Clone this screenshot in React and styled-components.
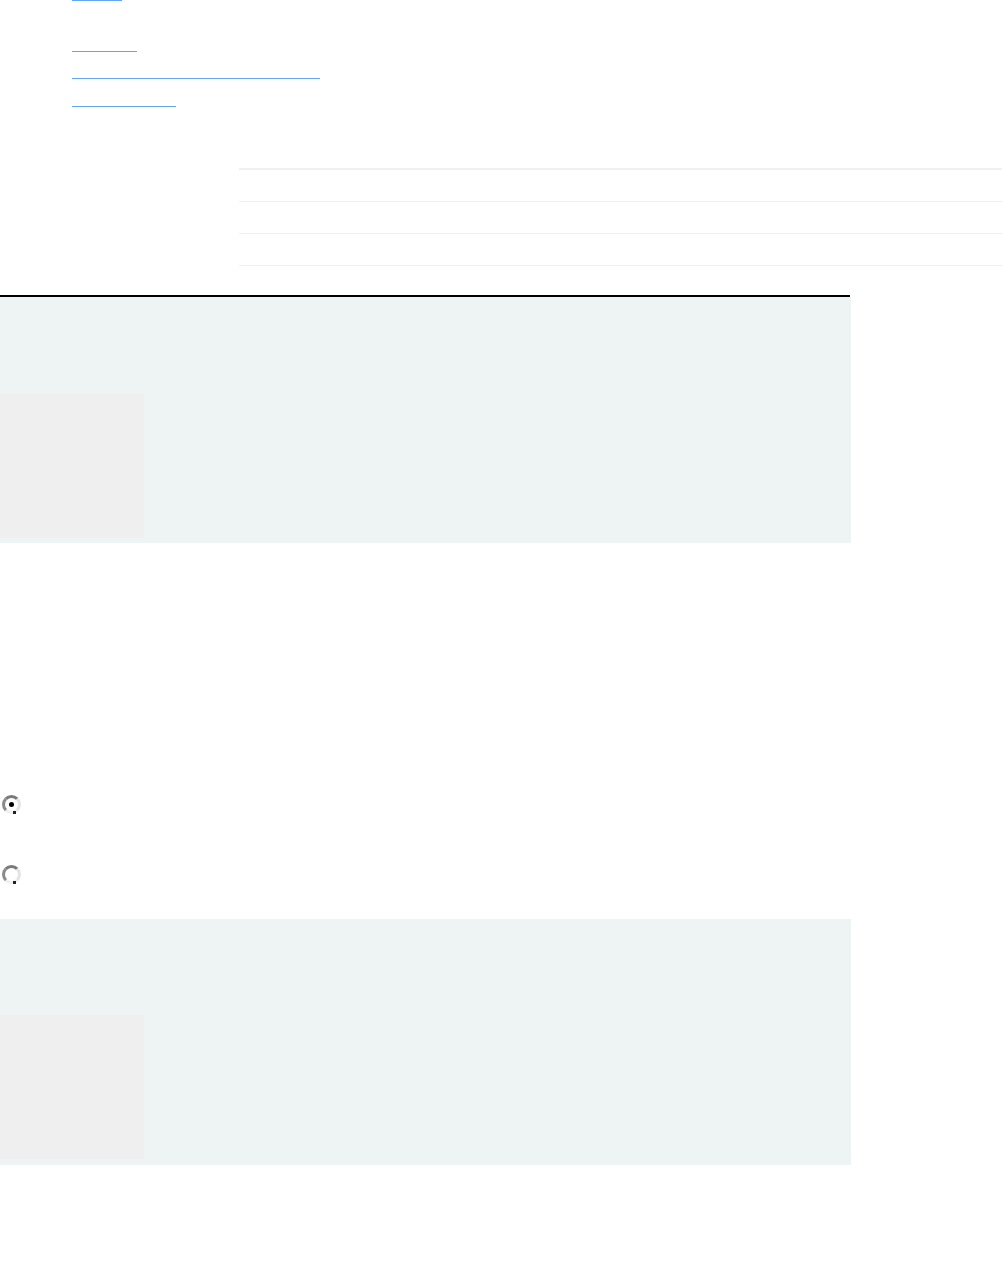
import React from "react";
import styled, { createGlobalStyle } from "styled-components";

const Global = createGlobalStyle`
  html, body { margin: 0; padding: 0; background: #fff; }
  body { font-family: "Liberation Sans", Arial, sans-serif; }
`;

const Page = styled.div`
  display: flex;
  flex-direction: column;
  width: 1002px;
`;

const LinkList = styled.ul`
  list-style: none;
  margin: 0;
  padding: 0 0 0 72px;
  display: flex;
  flex-direction: column;
`;

const LinkItem = styled.li`
  margin-top: ${(p) => p.$gap}px;
  display: flex;
`;

const Link = styled.a`
  display: block;
  width: ${(p) => p.$w}px;
  height: 0;
  border-bottom: 1px solid #62a7ef;
  color: transparent;
  font-size: 0;
`;

const Table = styled.div`
  margin: 61px 0 0 239px;
  border-top: 2px solid #edf1f1;
  display: flex;
  flex-direction: column;
`;

const Row = styled.div`
  height: 31px;
  border-bottom: 1px solid #efefef;
`;

const Rule = styled.div`
  margin-top: 29px;
  width: 850px;
  height: 2px;
  background: #000;
`;

const Panel = styled.section`
  width: 851px;
  height: 246px;
  box-sizing: border-box;
  padding: ${(p) => p.$top}px 0 5px 0;
  margin-top: ${(p) => p.$mt}px;
  background: #eef3f4;
  display: flex;
  align-items: flex-start;
`;

const Thumb = styled.div`
  width: 144px;
  height: 144px;
  background: #efefef;
`;

const RadioGroup = styled.div`
  margin-top: 252px;
  display: flex;
  flex-direction: column;
  gap: 51px;
  padding-left: 2px;
`;

const Radio = styled.span`
  position: relative;
  display: block;
  box-sizing: border-box;
  width: 19px;
  height: 19px;
  border-radius: 50%;
  border: 3px solid;
  border-color: #7a7a7a #e4e4e4 #f0f0f0 #8a8a8a;
  background: #fff;
  &::after {
    content: "";
    position: absolute;
    left: 4px;
    top: 4px;
    width: 5px;
    height: 5px;
    border-radius: 50%;
    background: ${(p) => (p.$checked ? "#000" : "transparent")};
  }
  &::before {
    content: "";
    position: absolute;
    right: 2px;
    bottom: -3px;
    width: 3px;
    height: 3px;
    background: #222;
  }
`;

export default function App() {
  return (
    <Page>
      <Global />
      <LinkList>
        <LinkItem $gap={0}><Link $w={50} href="#" /></LinkItem>
        <LinkItem $gap={50}><Link $w={65} href="#" /></LinkItem>
        <LinkItem $gap={26}><Link $w={248} href="#" /></LinkItem>
        <LinkItem $gap={27}><Link $w={104} href="#" /></LinkItem>
      </LinkList>
      <Table>
        <Row />
        <Row />
        <Row />
      </Table>
      <Rule />
      <Panel $top={97} $mt={0}>
        <Thumb />
      </Panel>
      <RadioGroup>
        <Radio $checked />
        <Radio />
      </RadioGroup>
      <Panel $top={96} $mt={35}>
        <Thumb />
      </Panel>
    </Page>
  );
}
